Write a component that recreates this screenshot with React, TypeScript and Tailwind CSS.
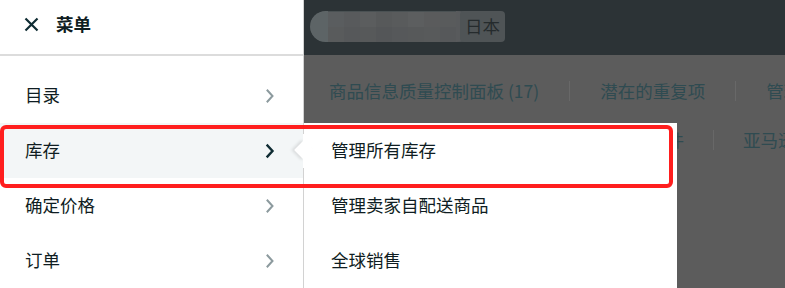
import React from "react";

const FONT = { fontFamily: '"Noto Sans CJK SC", "Noto Sans", sans-serif' };

function Chevron({ active }: { active?: boolean }) {
  return (
    <svg width="10" height="16" viewBox="0 0 10 16" fill="none">
      <path
        d="M2.5 2.5 L7.5 8 L2.5 13.5"
        stroke={active ? "#0f2c33" : "#8c9a9e"}
        strokeWidth={active ? 2.4 : 2}
        strokeLinecap="square"
        strokeLinejoin="miter"
      />
    </svg>
  );
}

const mosaic = [
  ["#5a5d5f", "#585a5c", "#5b5d5e", "#57595a", "#595b5c", "#5c5e5f", "#5a5b5c", "#595b5c"],
  ["#595b5c", "#56585a", "#57595a", "#545658", "#56585a", "#57595a", "#585a5b", "#56585a"],
];

export default function App() {
  const menu = ["目录", "库存", "确定价格", "订单"];
  const sub = ["管理所有库存", "管理卖家自配送商品", "全球销售"];
  return (
    <div className="relative flex h-[288px] w-[785px] overflow-hidden bg-[#5c5c5c]" style={FONT}>
      {/* Drawer */}
      <div className="flex h-full w-[304px] shrink-0 flex-col border-r border-[#d2d2d2] bg-white">
        <div className="flex h-[56px] shrink-0 items-center gap-[17px] border-b-[2px] border-[#dcdcdc] pb-[5px] pl-[24px]">
          <svg width="15" height="15" viewBox="0 0 15 15">
            <path d="M1.5 1.5 L13.5 13.5 M13.5 1.5 L1.5 13.5" stroke="#0f2c33" strokeWidth="2.2" />
          </svg>
          <span className="text-[17.5px] font-bold text-[#0f1d22]">菜单</span>
        </div>
        <div className="flex flex-col pt-[12px]">
          {menu.map((m, i) => (
            <div
              key={m}
              className={`flex h-[55px] items-center justify-between pl-[25px] pr-[28px] text-[17.5px] text-[#0f1d22] ${
                i === 1 ? "bg-[#f3f6f7]" : ""
              }`}
            >
              <span>{m}</span>
              <Chevron active={i === 1} />
            </div>
          ))}
        </div>
      </div>

      {/* Dimmed page */}
      <div className="flex flex-1 flex-col">
        <div className="flex h-[55px] items-center bg-[#2c3336] pb-[2px] pl-[6px]">
          <div className="flex h-[31px] items-center overflow-hidden rounded-l-full bg-[#4a5153]">
            <div className="h-full w-[18px] rounded-l-full bg-[#5d6466]" />
            <div className="grid grid-cols-8">
              {mosaic.flat().map((c, i) => (
                <div key={i} className="h-[15px] w-[16px]" style={{ background: c }} />
              ))}
            </div>
            <div className="h-full w-[16px] rounded-r-full bg-[#585a5c]" />
          </div>
          <div className="-ml-[12px] flex h-[31px] items-center rounded-[4px] bg-[#4f5456] px-[5px] text-[17.5px] text-[#252b2d]">
            日本
          </div>
        </div>
        <div className="flex h-[72px] items-center whitespace-nowrap pl-[25px] text-[17.5px] text-[#2f4b51]">
          <span>商品信息质量控制面板 (17)</span>
          <span className="mx-[30px] h-[20px] w-px shrink-0 bg-[#686868]" />
          <span>潜在的重复项</span>
          <span className="mx-[30px] h-[20px] w-px shrink-0 bg-[#686868]" />
          <span>管理库存</span>
        </div>
        <div className="flex items-center whitespace-nowrap pl-[310px] text-[17.5px] text-[#2f4b51]">
          <span>上传文件</span>
          <span className="mx-[29px] h-[20px] w-px shrink-0 bg-[#686868]" />
          <span>亚马逊运营</span>
        </div>
      </div>

      {/* Submenu flyout */}
      <div className="absolute left-[304px] top-[123px] flex h-[165px] w-[373px] flex-col bg-white pl-[27px] text-[17.5px] text-[#0f1d22]">
        <div className="absolute -left-[7px] top-[20px] h-[14px] w-[14px] rotate-45 bg-white shadow-[-2px_2px_3px_rgba(0,0,0,0.10)]" />
        <div className="absolute -left-[1px] top-[11px] h-[34px] w-[8px] bg-white" />
        {sub.map((s) => (
          <div key={s} className="relative flex h-[55px] items-center">
            {s}
          </div>
        ))}
      </div>

      {/* Red highlight box */}
      <div className="pointer-events-none absolute left-0 top-[125px] h-[63px] w-[673px] rounded-[6px] border-[4px] border-[#ff1e1e]" />
    </div>
  );
}
